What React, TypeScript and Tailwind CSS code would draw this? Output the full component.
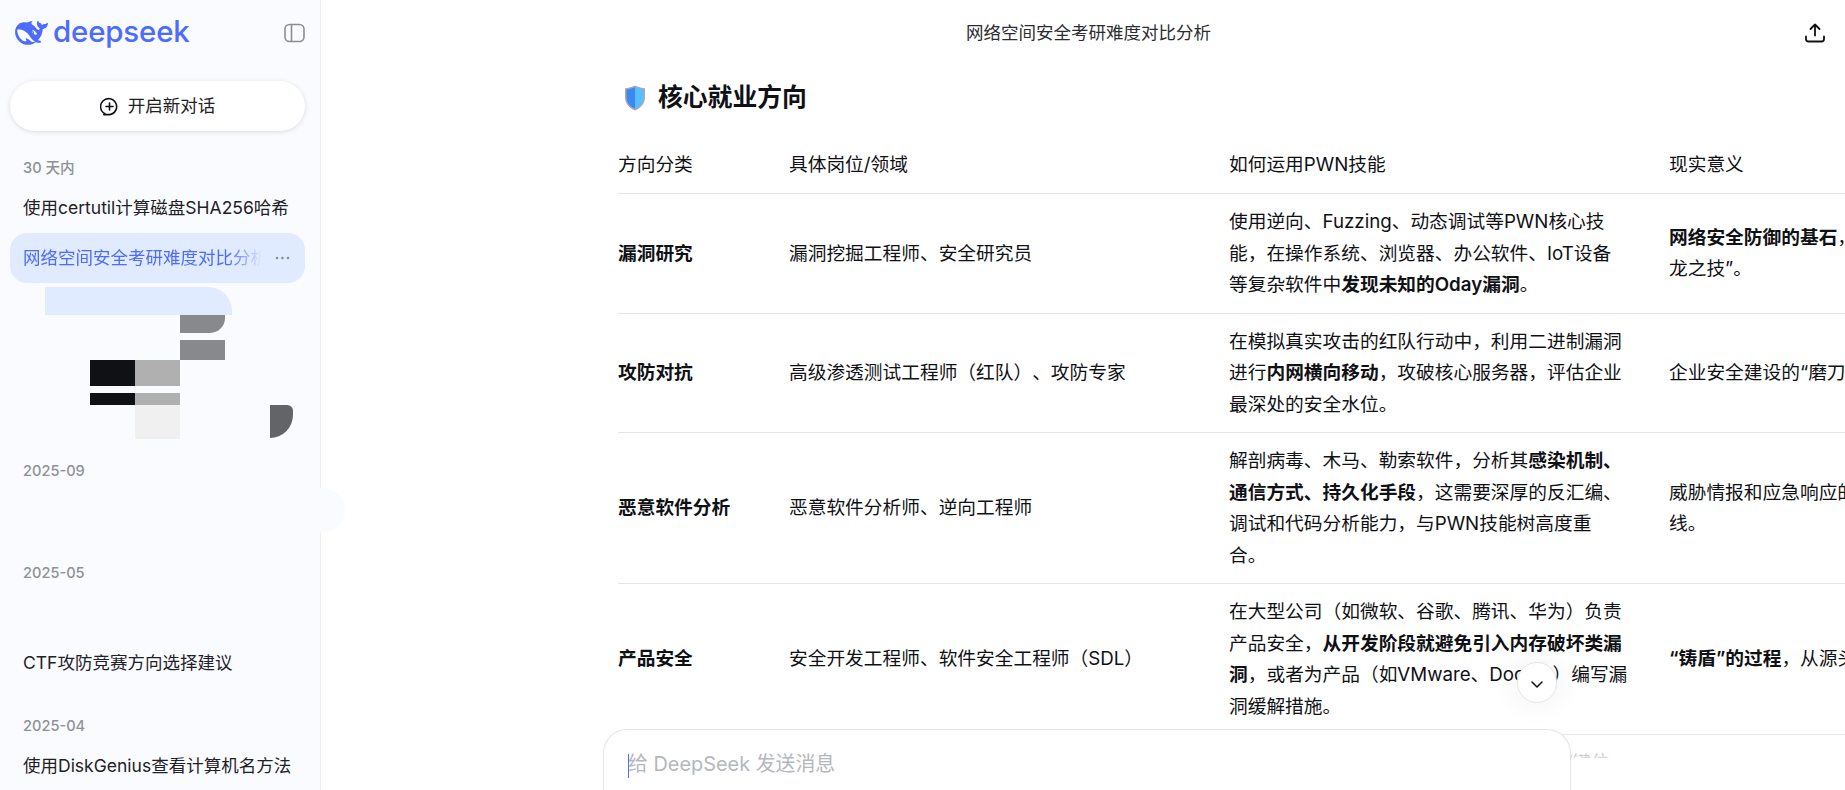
import React from 'react'

const FONT = 'font-["Inter","Noto_Sans_CJK_SC",sans-serif]'

const WHALE =
  'M23.748 4.482c-.254-.124-.364.113-.512.234-.051.039-.094.09-.137.136-.372.397-.806.657-1.373.626-.829-.046-1.537.214-2.163.848-.133-.782-.575-1.248-1.247-1.548-.352-.156-.708-.311-.955-.65-.172-.241-.219-.51-.305-.774-.055-.16-.11-.323-.293-.35-.2-.031-.278.136-.356.276-.313.572-.434 1.202-.422 1.84.027 1.436.633 2.58 1.838 3.393.137.093.172.187.129.323-.082.28-.18.552-.266.833-.055.179-.137.217-.329.14a5.526 5.526 0 01-1.736-1.18c-.857-.828-1.631-1.742-2.597-2.458a11.365 11.365 0 00-.689-.471c-.985-.957.13-1.743.388-1.836.27-.098.093-.432-.779-.428-.872.004-1.67.295-2.687.684a3.055 3.055 0 01-.465.137 9.597 9.597 0 00-2.883-.102c-1.885.21-3.39 1.102-4.497 2.623C.082 8.606-.231 10.684.152 12.85c.403 2.284 1.569 4.175 3.36 5.653 1.858 1.533 3.997 2.284 6.438 2.14 1.482-.085 3.133-.284 4.994-1.86.47.234.962.327 1.78.397.63.059 1.236-.03 1.705-.128.735-.156.684-.837.419-.961-2.155-1.004-1.682-.595-2.113-.926 1.096-1.296 2.746-2.642 3.392-7.003.05-.347.007-.565 0-.845-.004-.17.035-.237.23-.256a4.173 4.173 0 001.545-.475c1.396-.763 1.96-2.015 2.093-3.517.02-.23-.004-.467-.247-.588zM11.581 18c-2.089-1.642-3.102-2.183-3.52-2.16-.392.024-.321.471-.235.763.09.288.207.486.371.739.114.167.192.416-.113.603-.673.416-1.842-.14-1.897-.167-1.361-.802-2.5-1.86-3.301-3.307-.774-1.393-1.224-2.887-1.298-4.482-.02-.386.093-.522.477-.592a4.696 4.696 0 011.529-.039c2.132.312 3.946 1.265 5.468 2.774.868.86 1.525 1.887 2.202 2.891.72 1.066 1.494 2.082 2.48 2.914.348.292.625.514.891.677-.802.09-2.14.11-3.054-.614zm1-6.44a.306.306 0 01.415-.287.302.302 0 01.2.288.306.306 0 01-.31.307.303.303 0 01-.304-.308zm3.11 1.596c-.2.081-.399.151-.59.16a1.245 1.245 0 01-.798-.254c-.274-.23-.47-.358-.552-.758a1.73 1.73 0 01.016-.588c.07-.327-.008-.537-.239-.727-.187-.156-.426-.199-.688-.199a.559.559 0 01-.254-.078c-.11-.054-.2-.19-.114-.358.028-.054.16-.186.192-.21.356-.202.767-.136 1.146.016.352.144.618.408 1.001.782.391.451.462.576.685.914.176.265.336.537.445.848.067.195-.019.354-.25.452z'

// ── Sidebar bits ───────────────────────────────────────────────────────────

const GroupLabel: React.FC<{ children: React.ReactNode }> = ({ children }) => (
  <div className="h-[28px] flex items-center pl-[23px] text-[14.6px] font-medium text-[#8f9196]">{children}</div>
)

const ChatRow: React.FC<{ title?: string }> = ({ title }) => (
  <div className="h-[50px] flex items-center pl-[23px] text-[17.5px] text-[#1f2126] whitespace-nowrap">{title}</div>
)

// Broken-render tiles that sit over the chat list in the capture
const SidebarTiles = () => (
  <>
    <div className="absolute left-[45px] top-[287px] w-[187px] h-[28px] bg-[#e0ebff] rounded-tr-[24px]" />
    <div className="absolute left-[180px] top-[315px] w-[45px] h-[17.5px] bg-[#88898c] rounded-br-[15px]" />
    <div className="absolute left-[180px] top-[340px] w-[45px] h-[20px] bg-[#88898c]" />
    <div className="absolute left-[90px] top-[360px] w-[45px] h-[25.5px] bg-[#0f1115]" />
    <div className="absolute left-[135px] top-[360px] w-[45px] h-[25.5px] bg-[#b0b0b1]" />
    <div className="absolute left-[90px] top-[393px] w-[45px] h-[12px] bg-[#0f1115]" />
    <div className="absolute left-[135px] top-[393px] w-[45px] h-[12px] bg-[#b0b0b1]" />
    <div className="absolute left-[135px] top-[405px] w-[45px] h-[33.5px] bg-[#f0f0f1]" />
    <div className="absolute left-[270px] top-[405px] w-[23px] h-[33px] bg-[#636468] rounded-[0_6px_24px_0]" />
  </>
)

const Sidebar = () => (
  <aside className="relative z-10 w-[321px] shrink-0 h-full bg-[#f9fbff] border-r border-[#eeeff2]">
    <div className="h-[66px] flex items-center pl-[15px] pr-[15px]">
      <svg width="33" height="26" viewBox="0 2.5 24 19" fill="#4d6bfe" className="shrink-0">
        <path d={WHALE} fillRule="evenodd" />
      </svg>
      <span className="ml-[5px] text-[29.5px] leading-none font-medium tracking-[-0.2px] text-[#4d6bfe] font-['Inter',sans-serif] -mt-[2px]">
        deepseek
      </span>
      <svg width="21" height="20" viewBox="0 0 21 20" fill="none" stroke="#8b8d93" strokeWidth="1.6" className="ml-auto mr-[0px]">
        <rect x="1" y="1.5" width="19" height="17" rx="4.5" />
        <path d="M7.5 1.5v17" />
      </svg>
    </div>

    <div className="pl-[10px] pr-[15px] pt-[15px]">
      <div className="h-[50px] bg-white rounded-full shadow-[0_1px_5px_rgba(0,0,0,0.13)] flex items-center justify-center gap-[9px] text-[17.5px] text-[#1f2126]">
        <svg width="19" height="19" viewBox="0 0 19 19" fill="none" stroke="#0f1115" strokeWidth="1.6" strokeLinecap="round">
          <path d="M5.2 16.9A8 8 0 1 1 9.5 17.6H3.8" />
          <path d="M9.5 6v7M6 9.5h7" />
        </svg>
        开启新对话
      </div>
    </div>

    <div className="mt-[24px]">
      <GroupLabel>30 天内</GroupLabel>
      <ChatRow title="使用certutil计算磁盘SHA256哈希" />
      <div className="ml-[10px] mr-[15px] h-[50px] rounded-[17px] bg-[#e0ebff] flex items-center pl-[13px] pr-[15px] text-[17.5px] text-[#4d6bfe]">
        <span className="w-[239px] overflow-hidden whitespace-nowrap [mask-image:linear-gradient(to_right,#000_205px,transparent_239px)]">
          网络空间安全考研难度对比分析
        </span>
        <svg width="15" height="4" viewBox="0 0 15 4" fill="#8b8d93" className="ml-auto">
          <circle cx="2" cy="2" r="1.3" />
          <circle cx="7.5" cy="2" r="1.3" />
          <circle cx="13" cy="2" r="1.3" />
        </svg>
      </div>
      <ChatRow />
      <ChatRow />
      <ChatRow />
    </div>

    <div className="mt-[25px]">
      <GroupLabel>2025-09</GroupLabel>
      <ChatRow />
    </div>

    <div className="mt-[24px]">
      <GroupLabel>2025-05</GroupLabel>
      <ChatRow />
      <ChatRow title="CTF攻防竞赛方向选择建议" />
    </div>

    <div className="mt-[25px]">
      <GroupLabel>2025-04</GroupLabel>
      <ChatRow title="使用DiskGenius查看计算机名方法" />
    </div>

    <SidebarTiles />

    <div className="absolute left-[300px] top-[488px] w-[45px] h-[44px] rounded-full bg-[#f9fbff]" />
  </aside>
)

// ── Table ──────────────────────────────────────────────────────────────────

const rows: [React.ReactNode, React.ReactNode, React.ReactNode, React.ReactNode][] = [
  [
    '漏洞研究',
    '漏洞挖掘工程师、安全研究员',
    <>使用逆向、Fuzzing、动态调试等PWN核心技能，在操作系统、浏览器、办公软件、IoT设备<br />等复杂软件中<b className="font-semibold">发现未知的Oday漏洞</b>。</>,
    <><b className="font-semibold">网络安全防御的基石</b>，技术门槛极高，被誉为“屠龙之技”。</>,
  ],
  [
    '攻防对抗',
    '高级渗透测试工程师（红队）、攻防专家',
    <>在模拟真实攻击的红队行动中，利用二进制漏洞进行<b className="font-semibold">内网横向移动</b>，攻破核心服务器，评估企业最深处的安全水位。</>,
    '企业安全建设的“磨刀石”，检验防御实际效果。',
  ],
  [
    '恶意软件分析',
    '恶意软件分析师、逆向工程师',
    <>解剖病毒、木马、勒索软件，分析其<b className="font-semibold">感染机制、通信方式、持久化手段</b>，这需要深厚的反汇编、调试和代码分析能力，与PWN技能树高度重<br />合。</>,
    '威胁情报和应急响应的基础，对抗网络攻击的前线。',
  ],
  [
    '产品安全',
    '安全开发工程师、软件安全工程师（SDL）',
    <>在大型公司（如微软、谷歌、腾讯、华为）负责产品安全，<b className="font-semibold">从开发阶段就避免引入内存破坏类漏洞</b>，或者为产品（如VMware、Docker）编写漏洞缓解措施。</>,
    <><b className="font-semibold">“铸盾”的过程</b>，从源头减少漏洞的产生。</>,
  ],
  [
    '',
    '',
    '安全工具开发、自动化漏洞挖掘平台研发/键位，相关岗位也需要同样的底层知识。',
    '',
  ],
]

const CareerTable = () => (
  <table className="w-[1051px] table-fixed border-separate border-spacing-0 text-[18.72px] leading-[31.5px] text-[#0f1115]">
    <colgroup>
      <col className="w-[171px]" />
      <col className="w-[440px]" />
      <col className="w-[440px]" />
    </colgroup>
    <thead>
      <tr>
        {['方向分类', '具体岗位/领域', '如何运用PWN技能', '现实意义'].map((h, i) => (
          <th key={h} className={`h-[58px] border-b border-[#e5e5e5] text-left font-normal ${i === 3 ? 'w-[440px]' : ''}`}>
            {h}
          </th>
        ))}
      </tr>
    </thead>
    <tbody>
      {rows.map((row, i) => (
        <tr key={i}>
          <td className="border-b border-[#e5e5e5] py-[12px] font-semibold">{row[0]}</td>
          <td className="border-b border-[#e5e5e5] py-[12px]">{row[1]}</td>
          <td className="border-b border-[#e5e5e5] py-[12px] pr-[38px]">{row[2]}</td>
          <td className="border-b border-[#e5e5e5] py-[12px] pr-[38px]">{row[3]}</td>
        </tr>
      ))}
    </tbody>
  </table>
)

// ── Main ───────────────────────────────────────────────────────────────────

const Main = () => (
  <main className="relative flex-1 min-w-0 h-full overflow-hidden bg-white">
    <header className="relative h-[66px] flex items-center justify-center pl-[11px] text-[17.5px] text-[#2b2d31]">
      网络空间安全考研难度对比分析
      <svg width="22" height="22" viewBox="0 0 22 22" fill="none" stroke="#0f1115" strokeWidth="1.8" strokeLinecap="round" strokeLinejoin="round" className="absolute right-[19px] top-[22px]">
        <path d="M11 13.5V2.5M6.5 7L11 2.5 15.5 7" />
        <path d="M2 14.5v2.5a2.5 2.5 0 0 0 2.5 2.5h13a2.5 2.5 0 0 0 2.5-2.5v-2.5" />
      </svg>
    </header>

    <div className="pl-[297px]">
      <div className="h-[70px] flex items-center pb-[7px]">
        <svg width="22" height="26" viewBox="0 0 22 26" className="ml-[6px] shrink-0">
          <path d="M11 0.5C8 2 4.5 3 1 3.2V12c0 6.5 4 11 10 13.5C17 23 21 18.500 21 12V3.2C17.500 3 14 2 11 0.5z" fill="#a9a6b8" />
          <path d="M11 2C8.500 3.300 5.500 4.200 2.500 4.500V12c0 5.500 3.400 9.500 8.500 11.800V2z" fill="#3b88f5" />
          <path d="M11 2c2.500 1.300 5.500 2.200 8.500 2.500V12c0 5.500-3.400 9.500-8.500 11.800V2z" fill="#55c0ff" />
        </svg>
        <h2 className="ml-[12px] text-[24.8px] font-bold text-[#0f1115]">核心就业方向</h2>
      </div>
      <CareerTable />
    </div>

    {/* fade under the composer */}
    <div className="absolute inset-x-0 bottom-0 h-[61px] bg-[linear-gradient(to_bottom,rgba(255,255,255,0)_0,rgba(255,255,255,0.85)_29px,#fff_29px)]" />

    <button className="absolute left-[1196px] top-[662px] w-[40px] h-[41px] rounded-full bg-white border border-[#e5e5e5] shadow-[0_0_30px_rgba(0,0,0,0.07)] flex items-center justify-center">
      <svg width="14" height="9" viewBox="0 0 14 9" fill="none" stroke="#0f1115" strokeWidth="1.5" strokeLinecap="round" strokeLinejoin="round" className="mt-[3px]">
        <path d="M2 2l5 5 5-5" />
      </svg>
    </button>

    <div className="absolute left-[282px] bottom-0 w-[968px] h-[61px] bg-white border border-b-0 border-[#e5e5e5] rounded-t-[24px] pl-[24px] pt-[18px] text-[19.9px] leading-[32px] text-[#b4b7bd]">
      <span className="inline-block w-px h-[24px] -mr-px align-middle bg-[#4d6bfe]" />
      给 DeepSeek 发送消息
    </div>
  </main>
)

export default function App() {
  return (
    <div className={`flex h-screen w-full overflow-hidden [text-spacing-trim:space-all] ${FONT}`}>
      <Sidebar />
      <Main />
    </div>
  )
}
